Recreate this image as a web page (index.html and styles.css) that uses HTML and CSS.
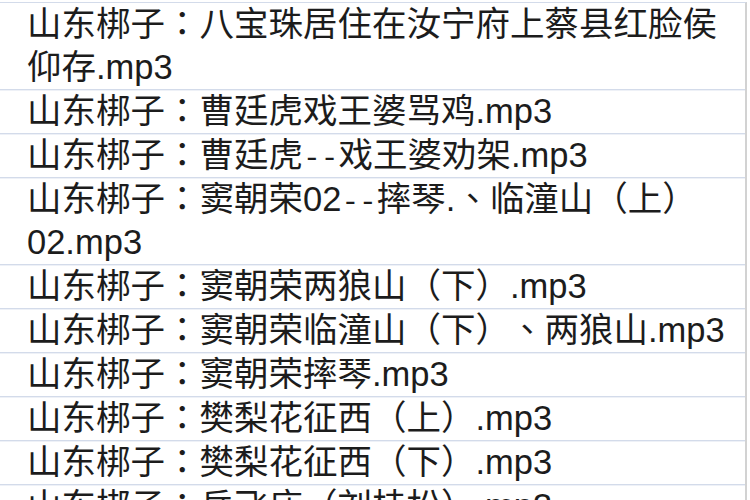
FILE: index.html
```html
<!DOCTYPE html>
<html lang="zh-CN">
<head>
<meta charset="utf-8">
<title>山东梆子</title>
<link rel="stylesheet" href="styles.css">
</head>
<body>
<div class="sheet">
  <div class="row">山东梆子<span class="p" lang="zh-TW">：</span>八宝珠居住在汝宁府上蔡县红脸侯仰存.mp3</div>
  <div class="row">山东梆子<span class="p" lang="zh-TW">：</span>曹廷虎戏王婆骂鸡.mp3</div>
  <div class="row">山东梆子<span class="p" lang="zh-TW">：</span>曹廷虎<span class="h">--</span>戏王婆劝架.mp3</div>
  <div class="row">山东梆子<span class="p" lang="zh-TW">：</span>窦朝荣02<span class="h">--</span>摔琴.<span class="p" lang="zh-TW">、</span>临潼山（上）02.mp3</div>
  <div class="row">山东梆子<span class="p" lang="zh-TW">：</span>窦朝荣两狼山（下）.mp3</div>
  <div class="row">山东梆子<span class="p" lang="zh-TW">：</span>窦朝荣临潼山（下）<span class="p" lang="zh-TW">、</span>两狼山.mp3</div>
  <div class="row">山东梆子<span class="p" lang="zh-TW">：</span>窦朝荣摔琴.mp3</div>
  <div class="row">山东梆子<span class="p" lang="zh-TW">：</span>樊梨花征西（上）.mp3</div>
  <div class="row">山东梆子<span class="p" lang="zh-TW">：</span>樊梨花征西（下）.mp3</div>
  <div class="row">山东梆子<span class="p" lang="zh-TW">：</span>岳飞庙（刘桂松）.mp3</div>
</div>
</body>
</html>
```
FILE: styles.css
```css
html, body {
  margin: 0;
  padding: 0;
  background: #ffffff;
  overflow: hidden;
}
.sheet {
  margin-top: 2px;
  width: 745px;
  border-top: 1px solid #d3dbea;
  border-right: 2px solid #d2d2d2;
  font-family: "Liberation Sans", "Noto Sans CJK SC", sans-serif;
  font-size: 34.5px;
  line-height: 43px;
  color: #1c1c1c;
  text-spacing-trim: space-all;
  font-kerning: none;
}
.row {
  padding-left: 27px;
  padding-right: 4px;
  border-bottom: 1px solid #d3dbea;
  box-shadow: 0 1px 0 #eef1f7;
}
.p {
  font-family: "Noto Sans CJK TC", "Noto Sans CJK SC", sans-serif;
  line-height: 1;
}
.h {
  font-family: "Liberation Mono", monospace;
  font-size: 29.5px;
  line-height: 1;
}
```
